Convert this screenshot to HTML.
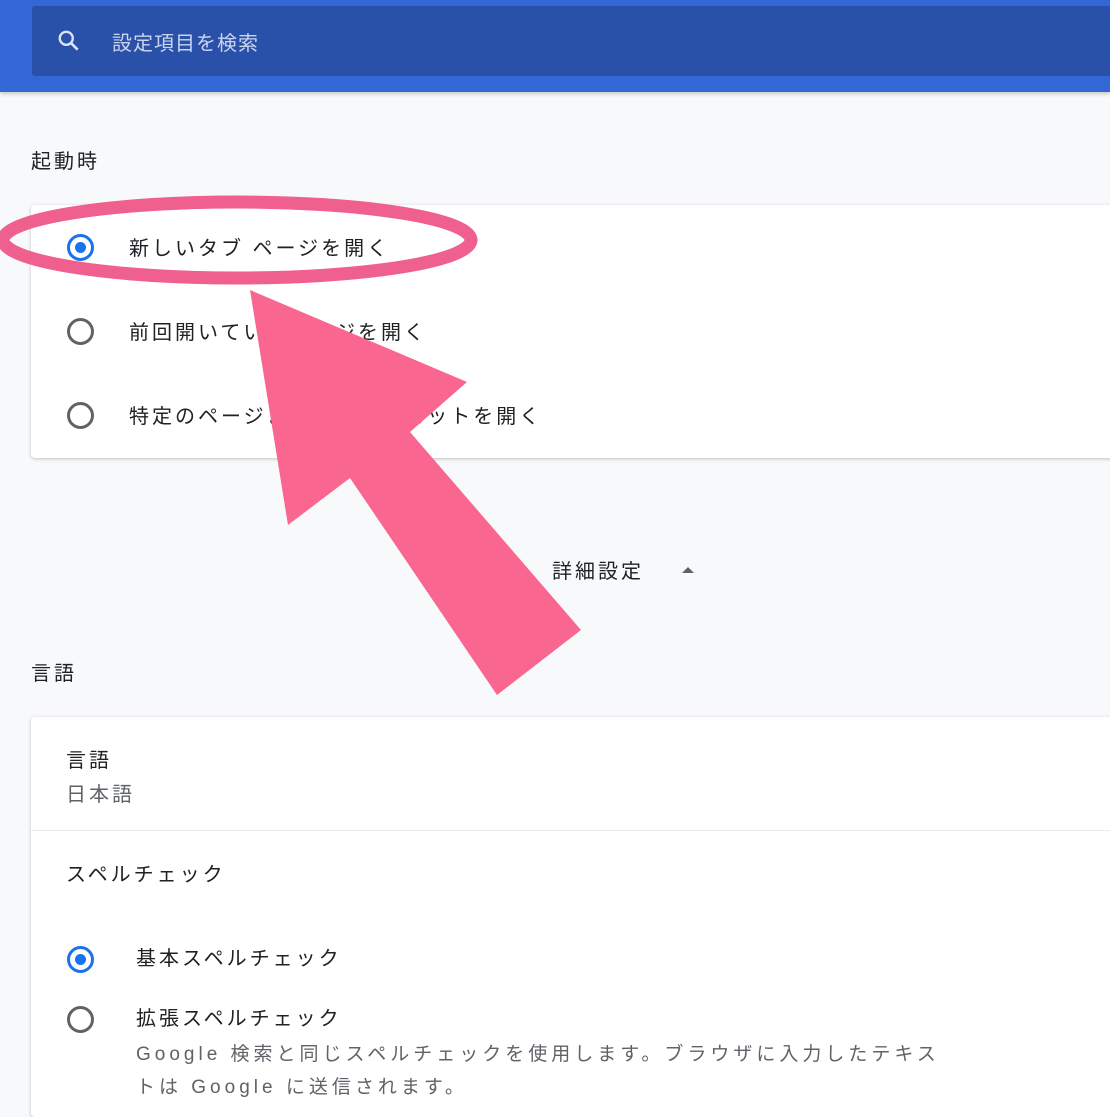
<!DOCTYPE html>
<html><head><meta charset="utf-8"><style>
body{margin:0;width:1110px;height:1090px;overflow:hidden;background:#f8f9fa;font-family:"Liberation Sans","Noto Sans CJK JP",sans-serif;color:#202124;position:relative}
.hdr{position:absolute;left:0;top:0;width:1110px;height:92px;background:#3367d6;box-shadow:0 2px 4px rgba(0,0,0,.2)}
.sb{position:absolute;left:32px;top:6px;width:1090px;height:70px;background:#2a51a9;border-radius:3px}
.sb span{position:absolute;left:80px;top:21px;font-size:20px;color:#c9d4ee;letter-spacing:1px}
.t{position:absolute;font-size:20px;white-space:nowrap;letter-spacing:3px}
.card{position:absolute;left:31px;width:1100px;background:#fff;border-radius:4px;box-shadow:0 1px 3px rgba(60,64,67,.3)}
.r{position:absolute;width:27px;height:27px;border:3px solid #5f6368;border-radius:50%;box-sizing:border-box}
.r.on{border-color:#1a73e8}
.r.on::after{content:"";position:absolute;left:5px;top:5px;width:11px;height:11px;border-radius:50%;background:#1a73e8}
</style></head><body>
<div class="hdr"><div class="sb">
<svg style="position:absolute;left:24px;top:22px" width="26" height="26" viewBox="0 0 24 24"><circle cx="9.5" cy="9.5" r="6" fill="none" stroke="#dbe3f5" stroke-width="2.2"/><path d="M14 14l6 6" stroke="#dbe3f5" stroke-width="2.4"/></svg>
<span>設定項目を検索</span></div></div>
<div class="t" style="left:31px;top:145px">起動時</div>
<div class="card" style="top:205px;height:253px">
<div class="r on" style="left:36px;top:29px"></div><div class="t" style="left:98px;top:27px">新しいタブ ページを開く</div>
<div class="r" style="left:36px;top:113px"></div><div class="t" style="left:98px;top:111px">前回開いていたページを開く</div>
<div class="r" style="left:36px;top:197px"></div><div class="t" style="left:98px;top:195px">特定のページまたはページセットを開く</div>
</div>
<div class="t" style="left:552px;top:555px">詳細設定</div>
<svg style="position:absolute;left:681px;top:565px" width="14" height="10"><path d="M1 8L7 2L13 8Z" fill="#5f6368"/></svg>
<div class="t" style="left:31px;top:657px">言語</div>
<div class="card" style="top:717px;height:400px">
<div class="t" style="left:35px;top:27px">言語</div>
<div class="t" style="left:35px;top:61px;color:#5f6368">日本語</div>
<div style="position:absolute;left:0;top:113px;width:100%;height:1px;background:#e8eaed"></div>
<div class="t" style="left:35px;top:141px">スペルチェック</div>
<div class="r on" style="left:36px;top:229px"></div><div class="t" style="left:105px;top:225px">基本スペルチェック</div>
<div class="r" style="left:36px;top:289px"></div><div class="t" style="left:105px;top:285px">拡張スペルチェック</div>
<div class="t" style="left:105px;top:322px;font-size:19px;color:#5f6368;letter-spacing:4px">Google 検索と同じスペルチェックを使用します。ブラウザに入力したテキス</div>
<div class="t" style="left:105px;top:355px;font-size:19px;color:#5f6368;letter-spacing:4px">トは Google に送信されます。</div>
</div>
<svg style="position:absolute;left:0;top:0" width="1110" height="1090">
<ellipse cx="237" cy="240" rx="234" ry="38" fill="none" stroke="#f0608f" stroke-width="13"/>
<polygon points="250,290 467,382 410,432 581,630 497,695 350,478 288,525" fill="#f96690"/>
</svg>
</body></html>
